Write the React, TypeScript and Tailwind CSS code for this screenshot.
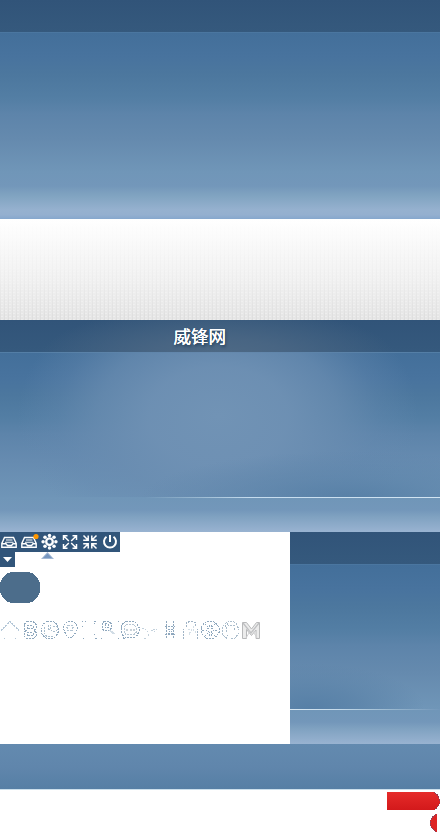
import React from "react";

const headerBar = "h-8 shrink-0 bg-gradient-to-b from-[#315479] to-[#35597d]";

function LineFade({ className }: { className: string }) {
  return <div className={`h-px shrink-0 ${className}`} />;
}

function Sky() {
  return (
    <section className="flex h-[219px] flex-col">
      <div className={headerBar} />
      <div className="grow bg-[linear-gradient(180deg,#527da5_0px,#436f9a_1px,#48739e_25px,#4c779e_42px,#537ea4_66px,#5d84aa_82px,#658aae_107px,#7096b8_140px,#7397ba_154px,#81a4c1_164px,#96b1cf_178px,#94afcf_183px,#86a7cd_187px)]" />
    </section>
  );
}

function Texture() {
  return (
    <section className="h-[101px] bg-[linear-gradient(180deg,#ffffff_0%,#fafafa_22%,#f1f1f1_60%,#e5e5e5_100%)]">
      <div className="h-full bg-[radial-gradient(circle,#ffffff55_0.7px,transparent_1px),linear-gradient(90deg,#00000007_1px,transparent_1px)] bg-size-[4px_3px] [mask-image:linear-gradient(transparent,#000)]" />
    </section>
  );
}

function Hero() {
  return (
    <section className="flex h-[212px] flex-col bg-[radial-gradient(ellipse_200px_140px_at_218px_96px,#7193b5_0%,#6f91b4ee_35%,#6a8db1bb_60%,#668ab055_80%,#668ab000_100%),linear-gradient(180deg,#436f9a_32px,#48739e_58px,#4c779e_75px,#537ea4_98px,#5d84aa_114px,#668bb0_140px,#7096b8_180px)]">
      <header className="flex h-8 shrink-0 items-start bg-[radial-gradient(ellipse_180px_55px_at_218px_40px,#506b86_0%,#486583_40%,#35597d00_100%),linear-gradient(180deg,#315479,#35597d)]">
        <h1 className="ml-[173.5px] mt-[2px] font-['Noto_Sans_CJK_SC',sans-serif] text-[17.5px] font-normal leading-[27px] text-white [text-shadow:0_0_0.6px_#fff,0_0_0.6px_#fff,1px_2px_3px_#223e59]">
          威锋网
        </h1>
      </header>
      <LineFade className="bg-[linear-gradient(90deg,#527da5,#6689ad,#527da5)]" />
      <div className="grow bg-[radial-gradient(ellipse_210px_48px_at_350px_146px,#547da4dd_0%,#5a82a888_45%,#5a82a800_100%)]" />
      <LineFade className="bg-[linear-gradient(90deg,#7096b8_145px,#9bbad2_200px,#c5dcee_250px,#d3e5f2)]" />
      <div className="h-[34px] shrink-0 bg-[linear-gradient(180deg,#7096b8,#7397ba_12px,#80a2c1_19px,#99b3d1)]" />
    </section>
  );
}

function Tray({ dot = false }: { dot?: boolean }) {
  return (
    <svg width="20" height="20" viewBox="0 0 20 20" fill="none" stroke="white" strokeWidth="1.4">
      <path d="M4.5 5.5h9l2.7 6v3.8H1.8v-3.8zM2 11.8h4l1.5 1.7h4l1.5-1.7h3" />
      <path d="M6 8h6.5M5 10.2h8.5" strokeWidth="1.1" />
      {dot && <circle cx="16" cy="4.5" r="2.6" fill="#ff9700" stroke="none" />}
    </svg>
  );
}

function Toolbar() {
  const petals = [[9.5, 3.4], [14, 5.2], [15.9, 9.7], [14, 14.2], [9.5, 16], [5, 14.2], [3.1, 9.7], [5, 5.2]];
  return (
    <div className="flex h-5 w-[120px] bg-[#31557a]">
      <Tray />
      <Tray dot />
      <svg width="20" height="20" viewBox="0 0 20 20" fill="none" stroke="white">
        <circle cx="9.5" cy="9.7" r="3.3" strokeWidth="2.3" />
        {petals.map(([x, y]) => <circle key={`${x}-${y}`} cx={x} cy={y} r="1.75" fill="white" stroke="none" />)}
      </svg>
      <svg width="20" height="20" viewBox="0 0 20 20" fill="none" stroke="white" strokeWidth="1.5">
        <path d="M3.5 8V3.8h4M3.8 4l5 5M12.5 3.8h4V8M16.2 4l-5 5M3.5 12v4.2h4M3.8 16l5-5M12.5 16.2h4V12M16.2 16l-5-5" />
      </svg>
      <svg width="20" height="20" viewBox="0 0 20 20" fill="none" stroke="white" strokeWidth="1.5">
        <path d="m3.5 3.5 5 5M8.2 3.5v4.8H3.2M16.5 3.5l-5 5M11.8 3.5v4.8h5M3.5 16.5l5-5M8.2 16.5v-4.8h-5M16.5 16.5l-5-5M11.8 16.5v-4.8h5" />
      </svg>
      <svg width="20" height="20" viewBox="0 0 20 20" fill="none" stroke="white" strokeWidth="2">
        <path d="M10 3v7M6.5 4.7a6 6 0 1 0 7 0" />
      </svg>
    </div>
  );
}

function OutlineIcons() {
  return (
    <svg width="264" height="22" viewBox="0 619 264 22" fill="none" stroke="#8fa8be" strokeWidth="1" strokeDasharray="2 1" shapeRendering="crispEdges">
      <path d="M1 630.5 10 621.5l9 9M4 638.5h1M15 638.5h1" stroke="#b5c8d8" />
      <path d="M27 621.5h6l3 3v4l-2 2 2 2v4l-3 2h-6l-3-2v-4l2-2-2-2v-4zM27 625.5h6v3h-6zM27 632.5h6v3h-6z" />
      <path d="M47 621.5h6l3 2 2 4v5l-2 4-3 2h-6l-3-2-3-4v-5l3-4z" />
      <path d="M44 626.5v7l3 3h6M48.5 625v4h2v-4M51 630l2 2 4-2v-3l-4-1" stroke="#a9bdcd" />
      <path d="m69.5 638.5-3-3-2-4-1-3v-3l3-3 3-1h3l3 2 2 4-1 4-3 4z" />
      <path d="M68 625.5h4l1 2-1 3h-4l-1-3z" stroke="#b2c4d3" />
      <path d="M82.5 622v-1M86 621.5h-1M94 621.5h2M94.5 623v1M82.5 626v1M82.5 638.5h1M94.5 638.5h2M94.5 634v1" strokeDasharray="none" />
      <path d="M104 621.5h5l2 2v5l-2 2h-5l-2-2v-5zM105 623.5h3v4h-3z" />
      <path d="m109.5 630 4 4m-2-3 3 3" stroke="#d1dce5" strokeDasharray="none" />
      <path d="M101 638.5h1M118 621.5h1M118 638.5h1" strokeDasharray="none" />
      <path d="M126 621.5h8l3 2 2 4v4l-2 4-3 2h-7l-4 1v-3l-2-3v-5l2-4z" />
      <path d="M126 624.5h8l2 3v5l-2 2h-8l-2-2v-5z" stroke="#b7c7d4" />
      <path d="M126 629.5h2M129.5 629.5h2M133 629.5h2" stroke="#c8d2da" strokeWidth="2" strokeDasharray="none" />
      <path d="m142 628 4 2M147 631l2 2M151 630l4 2M144 638h2M148 636v-2M153 629h4" stroke="#c3d1dc" />
      <path d="M166.5 621v18M173.5 621v18M165 626.5h10M165 634.5h10M168 629l5 3M173 629l-5 3M168 633h5" />
      <path d="M183.5 639v-10M197.5 639v-10M186.5 627v-4l3-1.5h3l3 1.5v4" stroke="#a1b4c6" />
      <path d="M188 629h3v3h-2v3M193 626v4l2 1v2" stroke="#d4dfe7" />
      <path d="M207 621.5h6l3 2 3 4v5l-3 4-3 2h-6l-3-2-3-4v-5l3-4z" />
      <path d="M209 625v3l-3 2 3 2v4M211 625v3l3 2-3 2v4M202 630h3M215 630h3M205 624l3 3M215 624l-3 3M205 636l3-3M215 636l-3-3" />
      <path d="M227 638.5l-4-3-1-4v-4l3-4 4-2h4l3 2 2 4v2M226 632v-3l2-3 3-1h4M231 638h4l4-5" stroke="#acbecd" />
      <path d="M225 627l1-2 3-2M234 628v2M227 635v1" stroke="#a0b5c5" />
      <g shapeRendering="auto" strokeDasharray="none">
        <path d="M242.5 622.5h4l5 6.5 5-6.5h3v16h-3.5V630l-4.5 5.5-5-6v9h-4z" stroke="#b8b9ba" fill="#ececec" />
        <path d="m243 623 8 10 8-10" stroke="#bfc0c2" strokeWidth="1.3" />
        <path d="m246 638 3-5v-3M257 638l-3-5v-2" stroke="#d1d1d3" />
      </g>
    </svg>
  );
}

function Assets() {
  return (
    <div className="w-[290px] shrink-0 bg-white">
      <Toolbar />
      <div className="flex h-5">
        <div className="flex h-[15px] w-[15px] justify-center bg-[#31557a] pt-[5px]">
          <svg width="9" height="5" viewBox="0 0 9 5"><path d="M0 0h9L4.5 5z" fill="white" /></svg>
        </div>
        <svg width="13" height="7" viewBox="0 0 13 7" className="ml-[26px]">
          <path d="M0 7 6.5 0 13 7z" fill="#a3b9d5" /><path d="M2 6 6.5 1.5 11 6" fill="#7797c0" />
        </svg>
      </div>
      <svg width="40" height="31" viewBox="0 0 40 31" shapeRendering="crispEdges">
        <path d="M11 0h18q8 2 11 11v9q-3 9-11 11H11Q3 29 0 20v-9Q3 2 11 0z" fill="#4c6d8b" />
      </svg>
      <div className="mt-4"><OutlineIcons /></div>
    </div>
  );
}

function SidePanel() {
  return (
    <div className="flex grow flex-col">
      <div className={headerBar} />
      <div className="h-[145px] shrink-0 bg-[radial-gradient(ellipse_115px_45px_at_20px_145px,#567fa6_0%,#5a82a8bb_45%,#6087ad00_100%),linear-gradient(180deg,#527da5_0px,#436f9a_1px,#48739e_25px,#4c779e_42px,#537ea4_66px,#5d84aa_82px,#658aae_108px,#7096b8_145px)]" />
      <LineFade className="bg-[linear-gradient(90deg,#d8e7f2,#c3d9e9_50px,#9bb9d0_100px,#7397ba)]" />
      <div className="h-[34px] bg-[linear-gradient(180deg,#7096b8,#7397ba_12px,#80a2c1_19px,#99b3d1)]" />
    </div>
  );
}

function RedShapes() {
  return (
    <div className="flex h-[44px] flex-col items-end overflow-hidden bg-white pt-[2px]">
      <svg width="53" height="18" viewBox="0 0 53 18" shapeRendering="crispEdges">
        <defs><linearGradient id="redTop" x2="0" y2="1"><stop stopColor="#e62b29" /><stop offset="1" stopColor="#d3191b" /></linearGradient></defs>
        <path d="M0 0h47q5 2 6 9-1 7-6 9H0z" fill="url(#redTop)" />
        <path d="M47 .5q5 2 5.5 8.5-.5 6.5-5.5 8.5" fill="none" stroke="#963b50" strokeDasharray="2 1" />
      </svg>
      <svg width="7" height="18" viewBox="0 0 7 18" className="mr-[3px] mt-1" shapeRendering="crispEdges">
        <path d="M7 0Q0 2 0 9t7 9z" fill="#de2423" />
        <path d="M6.5.5Q.5 3 .5 9t6 8.5" fill="none" stroke="#944259" strokeDasharray="2 1" />
      </svg>
    </div>
  );
}

export default function App() {
  return (
    <main className="h-[834px] w-[440px] overflow-hidden bg-white">
      <Sky />
      <Texture />
      <Hero />
      <section className="flex h-[212px]"><Assets /><SidePanel /></section>
      <div className="h-[46px] border-b border-[#cbdfec] bg-gradient-to-b from-[#638aaf] via-[#6086ac] to-[#567fa5]" />
      <RedShapes />
    </main>
  );
}
